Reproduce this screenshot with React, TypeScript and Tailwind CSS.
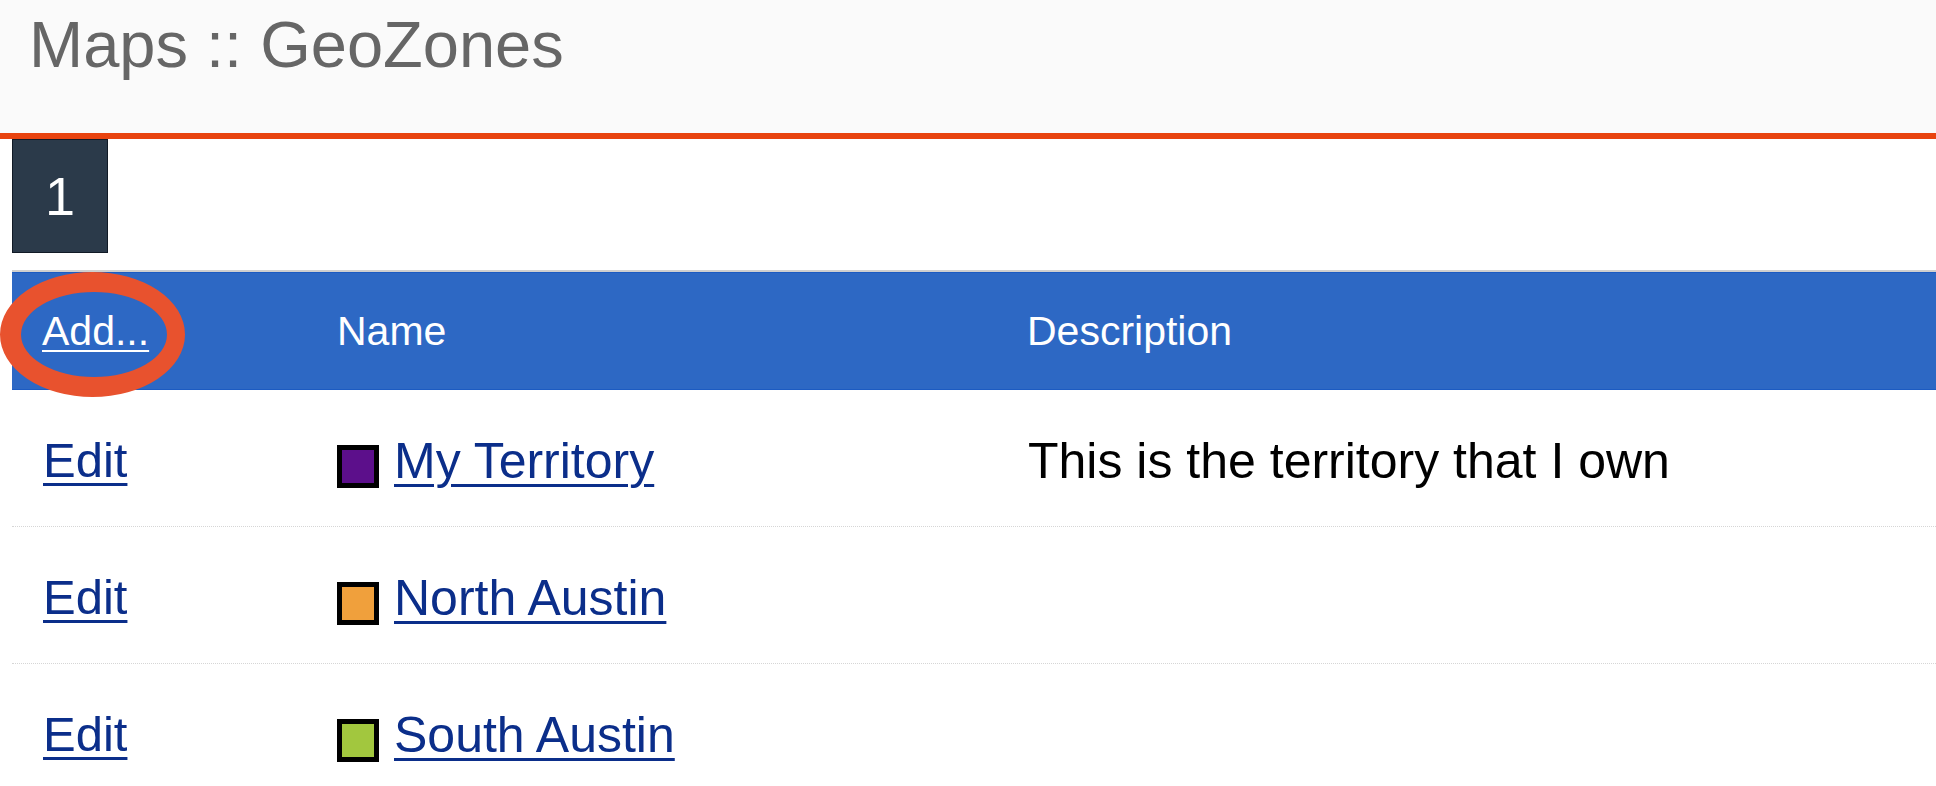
import React from "react";

const rows = [
  { name: "My Territory", color: "bg-[#5c0f8b]", desc: "This is the territory that I own" },
  { name: "North Austin", color: "bg-[#f0a03c]", desc: "" },
  { name: "South Austin", color: "bg-[#a2c73e]", desc: "" },
];

export default function App() {
  return (
    <div className="relative min-h-[786px] w-full overflow-hidden bg-white" style={{ fontFamily: '"Liberation Sans", Arial, sans-serif' }}>
      <header className="h-[139px] border-b-[6px] border-[#e8430f] bg-[#fafafa] pl-[29px] pt-[12px]">
        <h1 className="text-[65px] leading-none text-[#666666]">Maps :: GeoZones</h1>
      </header>

      <main className="pl-[12px]">
        <div className="flex h-[114px] w-[96px] items-center justify-center border border-[#111a26] bg-[#2b3a4a] text-[54px] leading-none text-white">
          1
        </div>

        <div className="mt-[17px] border-t-2 border-[#cfcfcf]">
          <div className="flex h-[118px] items-center border-y border-[#1c5bc2] bg-[#2d68c4] text-[41px] leading-none text-white">
            <div className="w-[291px] pl-[30px]">
              <a href="#" className="underline decoration-2 underline-offset-[5px]">Add...</a>
            </div>
            <div className="w-[693px] pl-[34px]">Name</div>
            <div className="pl-[31px]">Description</div>
          </div>

          {rows.map((r) => (
            <div key={r.name} className="flex h-[137px] items-center border-b border-dotted border-[#d6d6d6] pt-[5px] leading-none">
              <div className="w-[291px] pl-[31px] text-[49px]">
                <a href="#" className="text-[#0b2e8a] underline decoration-[3px] underline-offset-[6px]">Edit</a>
              </div>
              <div className="flex w-[693px] items-center pl-[34px] text-[50px]">
                <span className={`mt-[12px] mr-[15px] inline-block h-[43px] w-[42px] shrink-0 border-[5px] border-black ${r.color}`} />
                <a href="#" className="text-[#0b2e8a] underline decoration-[3px] underline-offset-[6px]">{r.name}</a>
              </div>
              <div className="pl-[32px] text-[50px] text-black">{r.desc}</div>
            </div>
          ))}
        </div>
      </main>

      <svg className="pointer-events-none absolute left-0 top-[272px]" width="186" height="126" viewBox="0 0 186 126">
        <path
          fillRule="evenodd"
          fill="#e8522e"
          d="M0 62.5 A92.5 62.5 0 1 0 185 62.5 A92.5 62.5 0 1 0 0 62.5 Z M21 62.5 A73 42.5 0 1 1 167 62.5 A73 42.5 0 1 1 21 62.5 Z"
        />
      </svg>
    </div>
  );
}
